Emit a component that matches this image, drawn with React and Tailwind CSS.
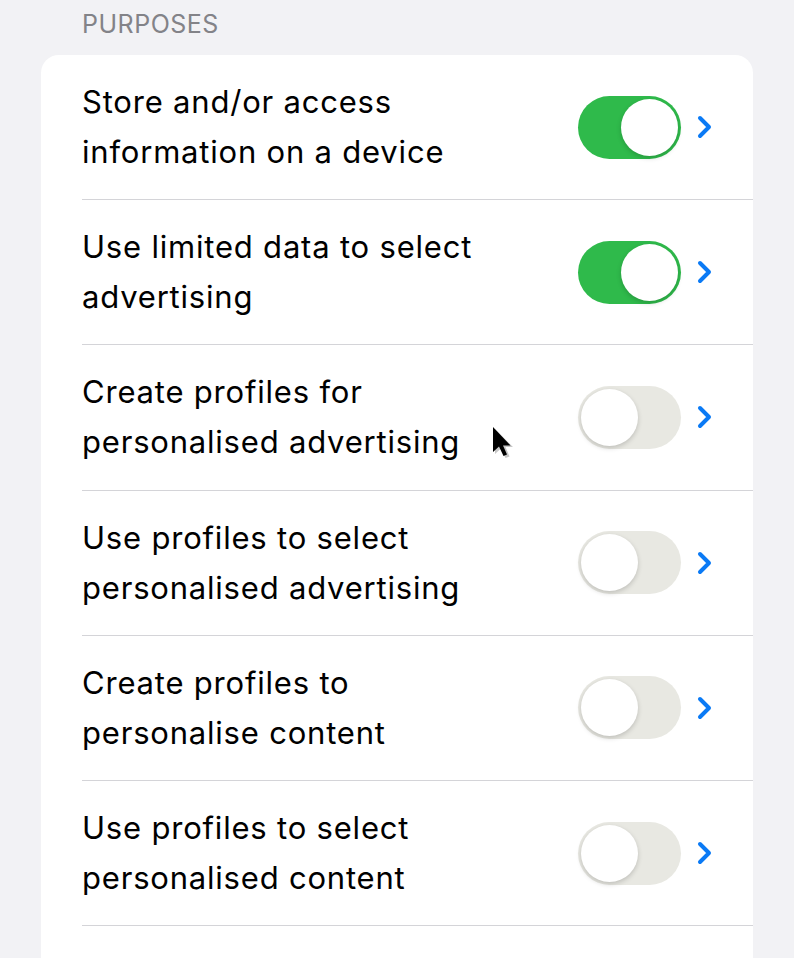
import React from 'react';

const purposes = [
  { id: 1, title: ['Store and/or access', 'information on a device'], on: true },
  { id: 2, title: ['Use limited data to select', 'advertising'], on: true },
  { id: 3, title: ['Create profiles for', 'personalised advertising'], on: false },
  { id: 4, title: ['Use profiles to select', 'personalised advertising'], on: false },
  { id: 5, title: ['Create profiles to', 'personalise content'], on: false },
  { id: 6, title: ['Use profiles to select', 'personalised content'], on: false },
];

function Toggle({ on }) {
  return (
    <div
      className={`flex items-center w-[103px] h-[63px] rounded-full p-[3px] ${
        on ? 'bg-[#2fba4b] justify-end' : 'bg-[#e8e8e2] justify-start'
      }`}
    >
      <div className="w-[57px] h-[57px] rounded-full bg-white shadow-[0_2px_5px_rgba(0,0,0,0.18)]" />
    </div>
  );
}

function Chevron() {
  return (
    <svg width="15" height="24" viewBox="0 0 15 24" fill="none">
      <path d="M3 3 L12 12 L3 21" stroke="#0a7af5" strokeWidth="4" strokeLinecap="round" strokeLinejoin="round" />
    </svg>
  );
}

function Cursor() {
  return (
    <svg className="absolute left-[491px] top-[425px]" width="26" height="36" viewBox="0 0 26 36">
      <path d="M4 4 L4 29 L10 23.5 L14.5 33 L18.5 31.5 L14.5 22 L22 22 Z" fill="rgba(0,0,0,0.22)" />
      <path d="M2 2 L2 27 L8 21.5 L12.5 31 L16 29.5 L12 20.5 L19.5 20.5 Z" fill="#000" />
    </svg>
  );
}

export default function App() {
  return (
    <div
      className="relative w-[794px] h-[958px] overflow-hidden bg-[#f2f2f5]"
      style={{ fontFamily: 'Inter, "Liberation Sans", sans-serif' }}
    >
      <div className="pl-[82px] pt-[9px] text-[25px] leading-[30px] tracking-[0.5px] text-[#838388]">
        PURPOSES
      </div>
      <div className="mt-[16px] ml-[41px] w-[712px] bg-white rounded-[18px] h-[920px]">
        {purposes.map(p => (
          <div key={p.id} className="pl-[41px]">
            <div className="flex items-center h-[145.2px] pr-[41px] border-b border-[#d4d4d8]">
              <div className="flex-1 text-[31px] leading-[50px] tracking-[0.8px] text-black">
                {p.title[0]}
                <br />
                {p.title[1]}
              </div>
              <Toggle on={p.on} />
              <div className="ml-[16px] flex items-center">
                <Chevron />
              </div>
            </div>
          </div>
        ))}
      </div>
      <Cursor />
    </div>
  );
}
